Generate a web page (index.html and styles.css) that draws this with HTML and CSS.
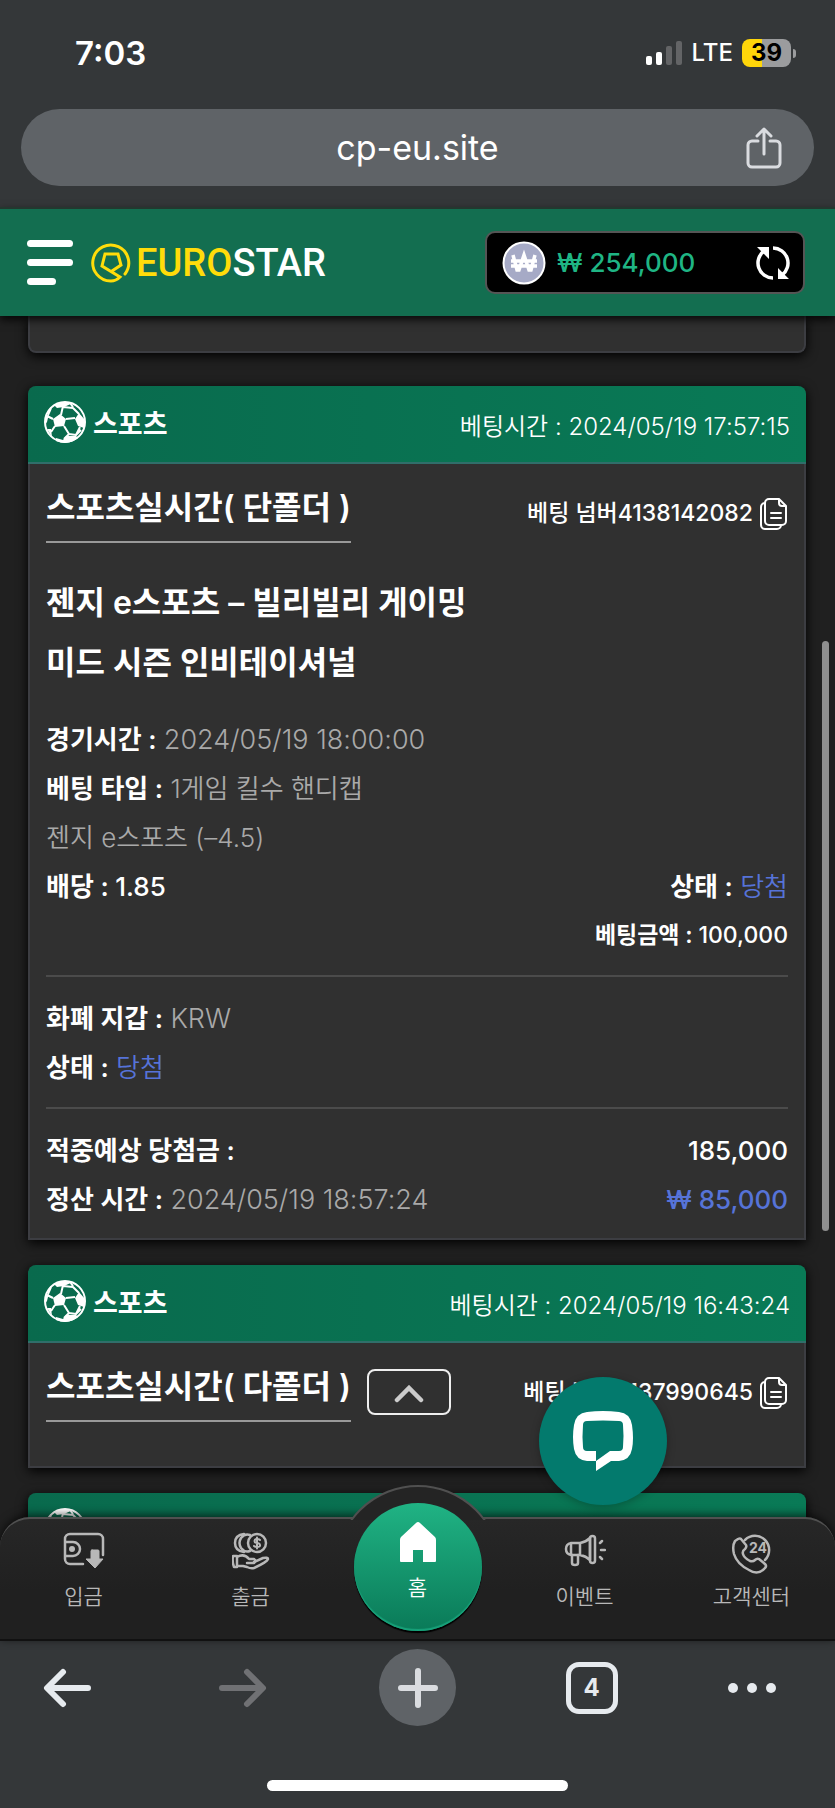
FILE: index.html
```html
<!DOCTYPE html>
<html lang="ko">
<head>
<meta charset="utf-8">
<meta name="viewport" content="width=device-width, initial-scale=1">
<title>EUROSTAR</title>
<link rel="stylesheet" href="styles.css">
</head>
<body>
<svg class="defs" aria-hidden="true">
  <symbol id="ball" viewBox="0 0 42 42">
    <circle cx="21" cy="21" r="20" fill="none" stroke="#fff" stroke-width="2"/>
    <path fill="#fff" d="M9 18l7-5 6 5-2 7-9 1zM10 4q9-5 19-2l-9 4-7 1zM31 18l4-6 6 7-1 8-6-2zM1 16l4-3-2 8-2 3zM12 37l7 2 3-4 10 0 2 2q-10 8-22 3zM3 28l4 0 1 8z"/>
    <path fill="none" stroke="#fff" stroke-width="2" stroke-linejoin="round" d="M17 14l2-9M19 6l10 1 6 6M29 6l-3-4M22 18l9-1M20 25l5 8-5 5M25 33l7 1 4-8M11 25l-4 6M9 18l-6-3M7 7l-3 7M31 35l6-6"/>
  </symbol>
  <symbol id="copy" viewBox="0 0 28 32">
    <path fill="none" stroke="#fff" stroke-width="2" stroke-linejoin="round" stroke-linecap="round" d="M9 1h10l7 7v15a4 4 0 0 1-4 4H9a4 4 0 0 1-4-4V5a4 4 0 0 1 4-4zM19 1v4a3 3 0 0 0 3 3h4M5 5a4 4 0 0 0-4 4v18a4 4 0 0 0 4 4h12a4 4 0 0 0 4-4M11 15h10M11 20h10"/>
  </symbol>
</svg>
<div class="phone">
  <div class="status">
    <time class="status-time">7:03</time>
    <div class="status-right">
      <svg width="38" height="26" viewBox="0 0 38 26"><g fill="#fff"><rect x="1" y="16" width="6" height="9" rx="2"/><rect x="11" y="12" width="6" height="13" rx="2"/></g><g fill="#636466"><rect x="21" y="6" width="6" height="19" rx="2"/><rect x="31" y="1" width="6" height="24" rx="2"/></g></svg>
      <span class="lte">LTE</span>
      <span class="battery">39</span>
      <span class="battery-tip"></span>
    </div>
  </div>
  <div class="address">
    <span class="url">cp-eu.site</span>
    <button class="icon-btn share" aria-label="공유"><svg width="36" height="42" viewBox="0 0 36 42" fill="none" stroke="#dadce0" stroke-width="3" stroke-linecap="round" stroke-linejoin="round"><path d="M12 14H6a4 4 0 0 0-4 4v18a4 4 0 0 0 4 4h24a4 4 0 0 0 4-4V18a4 4 0 0 0-4-4h-6M18 27V2M11 9l7-7 7 7"/></svg></button>
  </div>

  <header class="site-header">
    <button class="icon-btn menu" aria-label="메뉴"><span></span><span></span><span></span></button>
    <a class="logo" href="#">
      <svg width="40" height="40" viewBox="0 0 40 40" fill="none" stroke="#ffdc0a" stroke-width="3" stroke-linecap="round"><path d="M34 31A18 18 0 1 0 20 38q5 0 9-4l-18-11 3-12h13l3 11-9 6"/></svg>
      <span class="logo-text"><span class="logo-euro">EURO</span>STAR</span>
    </a>
    <div class="balance">
      <svg class="coin" width="44" height="44" viewBox="0 0 44 44"><circle cx="22" cy="22" r="20.500" fill="#a6aac6" stroke="#fff" stroke-width="2"/><path d="M11 14l4 15h2l5-15 5 15h2l4-15M9 20h26M9 25h26" fill="none" stroke="#fff" stroke-width="3.500"/></svg>
      <span class="amount">₩ 254,000</span>
      <button class="icon-btn" aria-label="새로고침"><svg width="36" height="36" viewBox="0 0 36 36"><path d="M18 33A15 15 0 0 1 9 6M18 3A15 15 0 0 1 27 30" fill="none" stroke="#fff" stroke-width="3.500"/><path d="M2 2h12v12zM34 34H23V23z" fill="#fff"/></svg></button>
    </div>
  </header>

  <main class="history">
    <article class="card previous"></article>

    <article class="card">
      <header class="card-head">
        <svg width="42" height="42"><use href="#ball"/></svg>
        <h2>스포츠</h2>
        <span class="when">베팅시간 : 2024/05/19 17:57:15</span>
      </header>
      <div class="card-body">
        <div class="title-row">
          <h3>스포츠실시간( 단폴더 )</h3>
          <span class="bet-no">베팅 넘버4138142082</span>
          <button class="icon-btn" aria-label="복사"><svg width="28" height="32"><use href="#copy"/></svg></button>
        </div>
        <div class="match">
          <p>젠지 e스포츠 – 빌리빌리 게이밍</p>
          <p>미드 시즌 인비테이셔널</p>
        </div>
        <div class="rows">
          <p><b>경기시간 :</b> <time>2024/05/19 18:00:00</time></p>
          <p><b>베팅 타입 :</b> 1게임 킬수 핸디캡</p>
          <p>젠지 e스포츠 (–4.5)</p>
          <p class="split"><b>배당 : <span class="figure">1.85</span></b><span><b>상태 :</b> <span class="win">당첨</span></span></p>
          <p class="stake"><b>베팅금액 : <span class="figure">100,000</span></b></p>
        </div>
        <div class="rows ruled">
          <p><b>화폐 지갑 :</b> <span class="currency">KRW</span></p>
          <p><b>상태 :</b> <span class="win">당첨</span></p>
        </div>
        <div class="rows ruled">
          <p class="split"><b>적중예상 당첨금 :</b><b class="figure">185,000</b></p>
          <p class="split"><span><b>정산 시간 :</b> <time>2024/05/19 18:57:24</time></span><span class="win figure">₩ 85,000</span></p>
        </div>
      </div>
    </article>

    <article class="card">
      <header class="card-head">
        <svg width="42" height="42"><use href="#ball"/></svg>
        <h2>스포츠</h2>
        <span class="when">베팅시간 : 2024/05/19 16:43:24</span>
      </header>
      <div class="card-body folded">
        <div class="title-row">
          <h3>스포츠실시간( 다폴더 )</h3>
          <button class="fold" aria-label="펼치기"><svg width="30" height="18" viewBox="0 0 30 18"><path d="M3 15L15 3l12 12" fill="none" stroke="#ccc" stroke-width="4.500" stroke-linecap="round"/></svg></button>
          <span class="bet-no">베팅 넘버4137990645</span>
          <button class="icon-btn" aria-label="복사"><svg width="28" height="32"><use href="#copy"/></svg></button>
        </div>
      </div>
    </article>

    <article class="card">
      <header class="card-head">
        <svg width="42" height="42"><use href="#ball"/></svg>
        <h2>스포츠</h2>
      </header>
    </article>
    <span class="scroll-thumb"></span>
  </main>

  <nav class="tabs">
    <span class="bump"></span>
    <a href="#"><svg width="42" height="38" viewBox="0 0 42 38" fill="none" stroke="#b8b8b8" stroke-width="2.500" stroke-linecap="round"><path d="M20 32H7a5 5 0 0 1-5-5V7a5 5 0 0 1 5-5h28a5 5 0 0 1 5 5v16M2 10h8a7 7 0 0 1 0 14H2"/><circle cx="9" cy="17" r="3" fill="#b8b8b8" stroke="none"/><path d="M29 18h6q1 0 1 1v8h4l-8 9-9-9h5v-8q0-1 1-1z" fill="#b8b8b8" stroke-width="1"/></svg><span>입금</span></a>
    <a href="#"><svg width="38" height="38" viewBox="0 0 38 38" fill="none" stroke="#b8b8b8" stroke-width="2.500" stroke-linejoin="round" stroke-linecap="round"><circle cx="25" cy="11" r="9"/><path d="M18 3q-5-2-9 3-3 5 0 10 4 5 9 3M12 2Q3 3 3 11t9 9"/><path stroke-width="2" d="M28 8q-1-1-3-1-2.500 0-2.500 2t2.500 2 3 2-3 2q-2 0-3-1M25 5.500v11"/><path d="M1 24h4v11H2q-2-5-1-11zM5 25q7-4 12 2h5q3 2 0 4h-7M22 30l9-4q5-1 5 1-1 3-14 9-3 1-7-1l-4-1H5"/></svg><span>출금</span></a>
    <a class="home" href="#"><svg width="38" height="42" viewBox="0 0 38 42"><path d="M19 1q1 0 2 1l15 14q1 1 1 3v21q0 1-1 1H24V29H14v12H2q-1 0-1-1V19q0-2 1-3L17 2q1-1 2-1z" fill="#fff"/></svg><span>홈</span></a>
    <a href="#"><svg width="42" height="38" viewBox="0 0 42 38" fill="none" stroke="#b8b8b8" stroke-width="2.500" stroke-linejoin="round" stroke-linecap="round"><path d="M16 11H7q-5 1-5 6t5 6h9zM7 11v12M16 11q6-1 10-5v22q-4-4-10-5"/><rect x="26" y="4" width="5" height="27" rx="2.500"/><path d="M8 23v8q0 2 3 2t3-2v-8M37 18h4M36 11l2-2M36 25l2 2"/></svg><span>이벤트</span></a>
    <a href="#"><svg width="42" height="42" viewBox="0 0 42 42" fill="none" stroke="#b8b8b8" stroke-width="2.500" stroke-linejoin="round" stroke-linecap="round"><path d="M14 8A14 14 0 1 1 34 28M4 9l3-2q2-1 3 0l5 6q1 2-1 4-3 2-2 5 1 4 7 7 3 1 5-1t4-1l6 5q2 2 0 4-7 8-16 2Q6 32 3 22 1 14 4 9z"/><text class="call-hours" x="18" y="21">24</text></svg><span>고객센터</span></a>
  </nav>

  <footer class="toolbar">
    <div class="toolbar-buttons">
      <button class="icon-btn" aria-label="뒤로"><svg width="50" height="42" viewBox="0 0 50 42" fill="none" stroke="#e6eaee" stroke-width="6" stroke-linecap="round" stroke-linejoin="round"><path d="M45 21H5M20 5L4 21l16 16"/></svg></button>
      <button class="icon-btn" aria-label="앞으로"><svg width="50" height="42" viewBox="0 0 50 42" fill="none" stroke="#707174" stroke-width="6" stroke-linecap="round" stroke-linejoin="round"><path d="M4 21h40M29 5l16 16-16 16"/></svg></button>
      <button class="icon-btn plus" aria-label="새 탭"><svg width="42" height="42" viewBox="0 0 42 42" fill="none" stroke="#dadce0" stroke-width="6" stroke-linecap="round"><path d="M21 4v34M4 21h34"/></svg></button>
      <button class="icon-btn tab-count">4</button>
      <button class="icon-btn" aria-label="더보기"><svg width="50" height="12" viewBox="0 0 50 12" fill="#e6eaee"><circle cx="6" cy="6" r="5"/><circle cx="25" cy="6" r="5"/><circle cx="44" cy="6" r="5"/></svg></button>
    </div>
    <span class="home-indicator"></span>
  </footer>

  <button class="icon-btn chat" aria-label="채팅"><svg width="62" height="62" viewBox="0 0 62 62"><path fill="#fff" fill-rule="evenodd" d="M15 2Q31 0 47 2q11 1 13 13 2 14 0 24-2 11-13 12h-8L24 61V51h-9Q4 50 2 39 0 27 2 15 4 3 15 2zM15 11q-4 0-4 4-1 12 0 22 0 4 4 4h9v10l14-10h9q4 0 4-4 1-11 0-22 0-4-4-4-16-1-32 0z"/></svg></button>
</div>
</body>
</html>
```
FILE: styles.css
```css
* { box-sizing: border-box; }

body {
  margin: 0;
  background: #202020;
  color: #fff;
  font-family: Inter, "Noto Sans CJK KR", sans-serif;
  font-size: 26px;
}

h2, h3, p { margin: 0; }
a { color: inherit; text-decoration: none; }
svg { display: block; flex: none; }
.defs { position: absolute; width: 0; height: 0; }

.icon-btn {
  display: flex;
  align-items: center;
  justify-content: center;
  flex: none;
  padding: 0;
  border: 0;
  background: none;
  color: inherit;
  font: inherit;
}

.phone {
  position: relative;
  display: flex;
  flex-direction: column;
  height: 100vh;
  overflow: hidden;
  background: #343739;
}

/* status bar and address bar */
.status {
  display: flex;
  align-items: center;
  justify-content: space-between;
  padding: 32px 39px 0 75px;
  line-height: 42px;
}
.status-time { font-size: 33px; font-weight: 600; }
.status-right { display: flex; align-items: center; }
.lte { margin: 0 9px; font-size: 24px; font-weight: 500; }
.battery {
  width: 49px;
  height: 28px;
  border-radius: 8px;
  background: linear-gradient(90deg, #ffd60a 40%, #9b9c9e 40%);
  color: #000;
  font-size: 24px;
  font-weight: 700;
  line-height: 28px;
  text-align: center;
}
.battery-tip {
  width: 3px;
  height: 9px;
  margin-left: 2px;
  border-radius: 0 4px 4px 0;
  background: #9b9c9e;
}
.address {
  display: flex;
  align-items: center;
  margin: 35px 21px 21px;
  padding: 0 32px 0 68px;
  height: 77px;
  border-radius: 39px;
  background: #5f6367;
}
.url { flex: 1; font-size: 34px; text-align: center; }

/* site header */
.site-header {
  position: relative;
  z-index: 2;
  display: flex;
  align-items: center;
  height: 109px;
  padding: 0 30px 0 27px;
  border-top: 2px solid #23382f;
  background: #136e50;
  box-shadow: 0 4px 8px #000c;
}
.menu { flex-direction: column; align-items: flex-start; gap: 12px; }
.menu span { width: 46px; height: 7px; border-radius: 4px; background: #fff; }
.menu span:last-child { width: 29px; }
.logo { display: flex; align-items: center; gap: 5px; margin-left: 18px; }
.logo-text { font-family: Roboto, sans-serif; font-size: 38px; font-weight: 500; line-height: 48px; }
.logo-euro { color: #ffdc0a; }
.balance {
  display: flex;
  align-items: center;
  width: 320px;
  height: 63px;
  margin-left: auto;
  padding: 0 12px 0 15px;
  border: 2px solid #555;
  border-radius: 10px;
  background: #000;
}
.amount { flex: 1; margin-left: 11px; color: #1fb584; font-weight: 500; }

/* betting history */
.history {
  position: relative;
  display: flex;
  flex: 1 1 0;
  flex-direction: column;
  gap: 25px;
  min-height: 0;
  padding: 0 29px 0 28px;
  overflow: hidden;
  background: #202020;
}
.card { flex: none; box-shadow: 0 3px 12px #000; border-radius: 8px 8px 0 0; }
.previous {
  height: 37px;
  margin-bottom: 8px;
  border: 2px solid #3c3d42;
  border-top: 0;
  border-radius: 0 0 8px 8px;
  background: #303030;
}
.card-head {
  display: flex;
  align-items: center;
  gap: 7px;
  height: 78px;
  padding: 0 16px 4px;
  border-bottom: 2px solid #306e6a;
  border-radius: 8px 8px 0 0;
  background: linear-gradient(90deg, #096a4d, #097a56);
}
.card-head h2 { font-size: 27px; font-weight: 700; }
.when { margin-left: auto; padding-top: 4px; font-size: 24px; font-weight: 350; }
.card-body {
  padding: 17px 16px 14px;
  border: 2px solid #3c3d42;
  border-top: 0;
  background: #303030;
}
.folded { padding-bottom: 41px; }
.title-row { display: flex; align-items: flex-start; }
h3 {
  padding-bottom: 6px;
  border-bottom: 2px solid #999;
  font-size: 32px;
  font-weight: 600;
  line-height: 54px;
}
.bet-no { margin-left: auto; font-size: 23px; font-weight: 500; line-height: 65px; }
.title-row .icon-btn { height: 65px; margin-left: 7px; }
.fold {
  display: flex;
  align-items: center;
  justify-content: center;
  width: 84px;
  height: 46px;
  margin: 9px 0 0 16px;
  padding: 4px 0 0;
  border: 2px solid #eee;
  border-radius: 8px;
  background: none;
}
.match { margin-top: 27px; font-size: 32px; font-weight: 600; line-height: 60px; }
.rows { color: #a9a9a9; font-weight: 350; line-height: 49px; }
.match + .rows { margin-top: 22px; }
.rows b { color: #fff; font-weight: 600; }
.rows time, .currency { font-size: 27px; }
.ruled { margin-top: 15px; padding-top: 17px; border-top: 2px solid #4b4b4b; }
.split { display: flex; justify-content: space-between; }
.stake { font-size: 23px; text-align: right; }
.rows .win { color: #5673d8; }
.rows .figure { font-weight: 500; }
.scroll-thumb {
  position: absolute;
  top: 325px;
  right: 6px;
  width: 7px;
  height: 590px;
  border-radius: 4px;
  background: #8f8f8f;
}

/* bottom navigation */
.tabs {
  position: relative;
  z-index: 2;
  display: grid;
  grid-template-columns: repeat(5, 1fr);
  height: 124px;
  margin-top: -30px;
  border-top: 2px solid #505050;
  border-bottom: 2px solid #111;
  border-radius: 30px 30px 0 0;
  background: linear-gradient(#272727, #202020 60%);
  box-shadow: 0 -2px 10px #000a;
  color: #b8b8b8;
  font-size: 21px;
  font-weight: 350;
}
.tabs a {
  display: flex;
  flex-direction: column;
  align-items: center;
  justify-content: space-between;
  height: 94px;
  padding-top: 13px;
  line-height: 32px;
}
.bump {
  position: absolute;
  top: -34px;
  left: calc(50% - 83px);
  width: 166px;
  height: 166px;
  border: 2px solid #505050;
  border-radius: 50%;
  background: #242424;
  clip-path: inset(0 0 131px 0);
}
.tabs .home {
  position: relative;
  align-self: start;
  justify-self: center;
  justify-content: flex-start;
  gap: 9px;
  width: 128px;
  height: 128px;
  margin-top: -16px;
  padding-top: 18px;
  border-radius: 50%;
  background: linear-gradient(#20b384, #0a7a58);
  box-shadow: inset 0 -2px 1px #18a27a, 0 2px 1px #000;
  color: #fff;
}
.call-hours { fill: #b8b8b8; stroke: none; font-size: 14px; font-weight: 700; }

/* browser toolbar */
.toolbar { position: relative; z-index: 1; height: 167px; padding-top: 8px; background: #343739; }
.toolbar-buttons {
  display: grid;
  grid-template-columns: repeat(5, 1fr);
  align-items: center;
  justify-items: center;
  height: 77px;
}
.toolbar-buttons > :first-child { margin-right: 32px; }
.toolbar-buttons > :nth-child(2) { margin-right: 16px; }
.plus { width: 77px; height: 77px; border-radius: 50%; background: #5f6367; }
.tab-count {
  width: 52px;
  height: 52px;
  margin-left: 14px;
  border: 5px solid #e6eaee;
  border-radius: 13px;
  color: #e6eaee;
  font-size: 24px;
  font-weight: 700;
}
.home-indicator {
  display: block;
  width: 36%;
  height: 11px;
  margin: 54px auto 0;
  border-radius: 6px;
  background: #fff;
}

.chat {
  position: absolute;
  right: 168px;
  bottom: 303px;
  z-index: 3;
  width: 128px;
  height: 128px;
  border-radius: 50%;
  background: #037a6d;
  box-shadow: 0 2px 8px #0004;
}
```
